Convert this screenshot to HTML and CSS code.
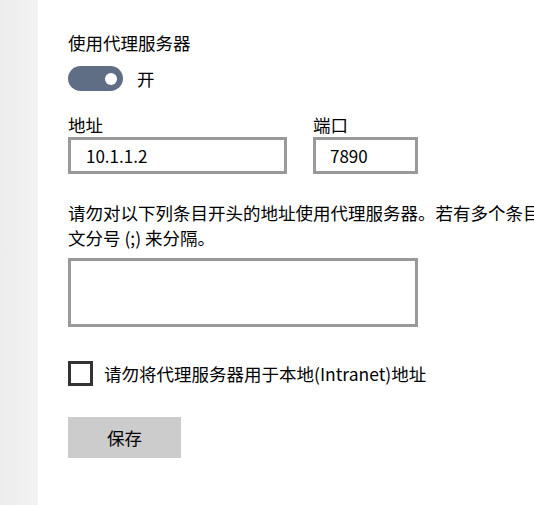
FILE: index.html
```html
<!DOCTYPE html>
<html lang="zh-CN">
<head>
<meta charset="utf-8">
<title>代理</title>
<link rel="stylesheet" href="styles.css">
</head>
<body>
<div class="sidebar"></div>
<main class="content">
  <div class="heading">使用代理服务器</div>
  <div class="toggle-row">
    <span class="toggle"><span class="knob"></span></span>
    <span class="toggle-text">开</span>
  </div>
  <div class="fields">
    <div class="field">
      <div class="label">地址</div>
      <div class="input input-address">10.1.1.2</div>
    </div>
    <div class="field">
      <div class="label">端口</div>
      <div class="input input-port">7890</div>
    </div>
  </div>
  <p class="desc">请勿对以下列条目开头的地址使用代理服务器。若有多个条目，请使用英文分号 (;) 来分隔。</p>
  <div class="textarea"></div>
  <label class="check-row">
    <span class="checkbox"></span>
    <span class="check-text">请勿将代理服务器用于本地(Intranet)地址</span>
  </label>
  <div class="button">保存</div>
</main>
</body>
</html>
```

FILE: styles.css
```css
html, body {
  margin: 0;
  padding: 0;
  background: #ffffff;
}
body {
  display: flex;
  width: 534px;
  height: 505px;
  overflow: hidden;
  font-family: "Noto Sans CJK SC", "Noto Sans", sans-serif;
  font-size: 17.5px;
  color: #000;
}
.sidebar {
  flex: 0 0 38px;
  background: linear-gradient(to right, #ececec, #f3f3f3);
}
.content {
  flex: 0 0 auto;
  padding-left: 30px;
  padding-top: 30px;
  display: flex;
  flex-direction: column;
  align-items: flex-start;
}
.heading {
  line-height: 25px;
  height: 25px;
}
.toggle-row {
  margin-top: 11px;
  display: flex;
  align-items: center;
  gap: 14px;
  height: 25px;
}
.toggle {
  width: 55px;
  height: 25px;
  border-radius: 13px;
  background: #5f6e85;
  display: flex;
  align-items: center;
  justify-content: flex-end;
  padding-right: 6px;
  box-sizing: border-box;
}
.knob {
  width: 12px;
  height: 12px;
  border-radius: 50%;
  background: #fff;
}
.toggle-text {
  line-height: 25px;
}
.fields {
  margin-top: 23px;
  display: flex;
  gap: 26px;
}
.label {
  line-height: 22px;
  height: 22px;
}
.input {
  margin-top: 1px;
  height: 37px;
  box-sizing: border-box;
  border: 3px solid #999;
  padding-left: 15px;
  display: flex;
  align-items: center;
  font-size: 17px;
}
.input-address { width: 219px; }
.input-port { width: 105px; padding-left: 14px; }
.desc {
  margin: 26px 0 0;
  width: 572px;
  line-height: 25px;
}
.textarea {
  margin-top: 8px;
  width: 350px;
  height: 69px;
  box-sizing: border-box;
  border: 3px solid #999;
}
.check-row {
  margin-top: 34px;
  display: flex;
  align-items: center;
  gap: 11px;
}
.checkbox {
  width: 25px;
  height: 25px;
  box-sizing: border-box;
  border: 3px solid #333;
}
.check-text {
  line-height: 25px;
}
.button {
  margin-top: 31px;
  width: 113px;
  height: 41px;
  background: #cccccc;
  display: flex;
  align-items: center;
  justify-content: center;
}
```
